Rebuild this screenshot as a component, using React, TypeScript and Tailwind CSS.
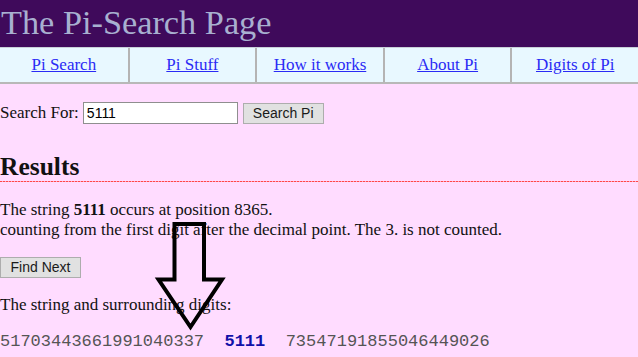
import React from "react";

const serif = { fontFamily: '"Liberation Serif", "Times New Roman", serif' };

export default function App() {
  const links = ["Pi Search", "Pi Stuff", "How it works", "About Pi", "Digits of Pi"];
  return (
    <div
      className="relative w-[638px] h-[357px] overflow-hidden bg-[#ffdcff] text-[17px] text-[#111]"
      style={serif}
    >
      <div className="h-[47px] bg-[#3f0a5b]">
        <h1 className="pl-[1px] text-[34.3px] leading-[45px] font-normal text-[#a8b0d0]">
          The Pi-Search Page
        </h1>
      </div>
      <nav className="grid grid-cols-5 bg-[#e8f8ff] border-t border-t-[#c8d0d8] border-b-2 border-b-[#b8b8b8]">
        {links.map((l, i) => (
          <div
            key={l}
            className={
              "h-[34px] leading-[34px] text-center " +
              (i > 0 ? "border-l-2 border-l-[#b4b4b4]" : "")
            }
          >
            <a href="#" className="text-[#2a2af5] underline">
              {l}
            </a>
          </div>
        ))}
      </nav>
      <main>
        <div className="mt-[18px] flex items-center h-[22px]">
          <span className="leading-[20px]">Search For:</span>
          <input
            readOnly
            value="5111"
            className="ml-[4px] w-[155px] h-[22px] bg-white border border-[#8f8f8f] px-[3px] text-[14px] text-black outline-none"
            style={{ fontFamily: '"Liberation Sans", Arial, sans-serif' }}
          />
          <button
            className="ml-[5px] h-[21px] px-[9px] bg-[#e1e1e1] border border-[#adadad] text-[14px] leading-[19px] text-[#1a1a1a]"
            style={{ fontFamily: '"Liberation Sans", Arial, sans-serif' }}
          >
            Search Pi
          </button>
        </div>
        <h2 className="mt-[29px] text-[25.5px] leading-[28px] font-bold">Results</h2>
        <div className="h-px bg-[repeating-linear-gradient(90deg,#ff4848_0px,#ff4848_2px,#ffa8c0_2px,#ffa8c0_3px)]" />
        <p className="mt-[18px] leading-[20px]">
          The string <b>5111</b> occurs at position 8365.
          <br />
          counting from the first digit after the decimal point. The 3. is not counted.
        </p>
        <button
          className="mt-[17px] block h-[21px] w-[81px] bg-[#e1e1e1] border border-[#adadad] text-[14px] leading-[19px] text-[#1a1a1a]"
          style={{ fontFamily: '"Liberation Sans", Arial, sans-serif' }}
        >
          Find Next
        </button>
        <p className="mt-[17px] leading-[20px]">The string and surrounding digits:</p>
        <pre
          className="mt-[17px] text-[17px] leading-[20px] text-[#555]"
          style={{ fontFamily: '"Liberation Mono", "Courier New", monospace' }}
        >
          51703443661991040337{"  "}
          <b className="text-[#1010a8]">5111</b>
          {"  "}73547191855046449026
        </pre>
      </main>
      <svg
        className="absolute left-0 top-0 pointer-events-none"
        width="638"
        height="357"
        viewBox="0 0 638 357"
      >
        <polygon
          points="174.5,224 204,224 204,279.5 222,279.5 190.5,327 158.5,279.5 174.5,279.5"
          fill="none"
          stroke="#000"
          strokeWidth="4"
          strokeLinejoin="miter"
        />
      </svg>
    </div>
  );
}
